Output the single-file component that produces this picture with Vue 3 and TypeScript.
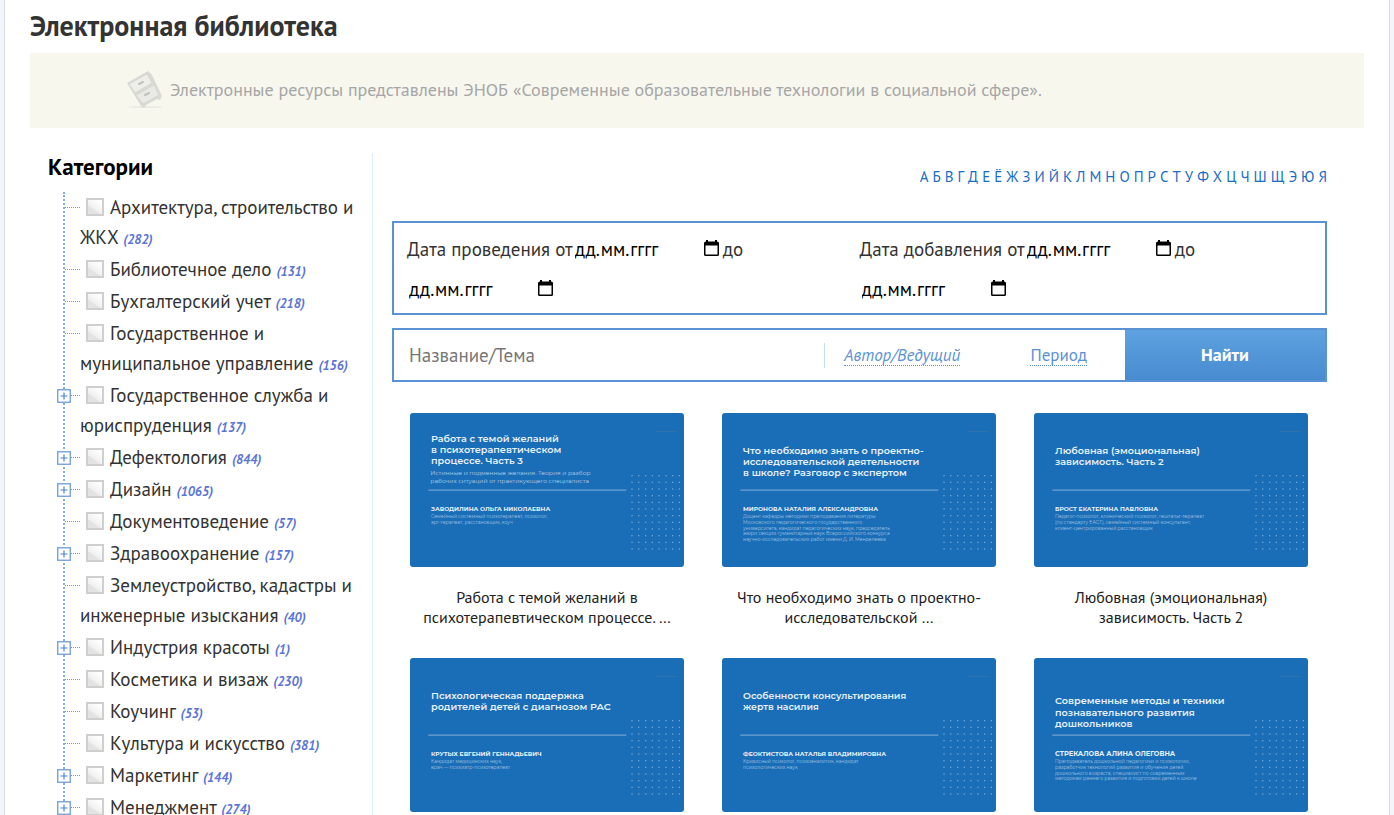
<script setup lang="ts">
import { ref } from 'vue'

interface Category {
  name: string
  count: number
  expandable?: boolean
}

interface Slide {
  caption: string
  titleY: number
  title: string[]
  compactTitle?: boolean
  subtitle?: string[]
  speaker: string
  largeSpeaker?: boolean
  about: string[]
}

const categories: Category[] = [
  { name: 'Архитектура, строительство и ЖКХ', count: 282 },
  { name: 'Библиотечное дело', count: 131 },
  { name: 'Бухгалтерский учет', count: 218 },
  { name: 'Государственное и муниципальное управление', count: 156 },
  { name: 'Государственное служба и юриспруденция', count: 137, expandable: true },
  { name: 'Дефектология', count: 844, expandable: true },
  { name: 'Дизайн', count: 1065, expandable: true },
  { name: 'Документоведение', count: 57 },
  { name: 'Здравоохранение', count: 157, expandable: true },
  { name: 'Землеустройство, кадастры и инженерные изыскания', count: 40 },
  { name: 'Индустрия красоты', count: 1, expandable: true },
  { name: 'Косметика и визаж', count: 230 },
  { name: 'Коучинг', count: 53 },
  { name: 'Культура и искусство', count: 381 },
  { name: 'Маркетинг', count: 144, expandable: true },
  { name: 'Менеджмент', count: 274, expandable: true },
]

const letters = [...'АБВГДЕЁЖЗИЙКЛМНОПРСТУФХЦЧШЩЭЮЯ']

const periods = [
  { id: 'event', label: 'Дата проведения от' },
  { id: 'added', label: 'Дата добавления от' },
]

const slides: Slide[] = [
  {
    caption: 'Работа с темой желаний в психотерапевтическом процессе. …',
    titleY: 86,
    title: ['Работа с темой желаний', 'в психотерапевтическом', 'процессе. Часть 3'],
    subtitle: ['Истинные и подменные желания. Теория и разбор', 'рабочих ситуаций от практикующего специалиста'],
    speaker: 'ЗАВОДИЛИНА ОЛЬГА НИКОЛАЕВНА',
    about: ['Семейный системный психотерапевт, психолог,', 'арт-терапевт, расстановщик, коуч'],
  },
  {
    caption: 'Что необходимо знать о проектно-исследовательской …',
    titleY: 122,
    title: ['Что необходимо знать о проектно-', 'исследовательской деятельности', 'в школе? Разговор с экспертом'],
    speaker: 'МИРОНОВА НАТАЛИЯ АЛЕКСАНДРОВНА',
    about: [
      'Доцент кафедры методики преподавания литературы',
      'Московского педагогического государственного',
      'университета, кандидат педагогических наук, председатель',
      'жюри секции гуманитарных наук Всероссийского конкурса',
      'научно-исследовательских работ имени Д. И. Менделеева',
    ],
  },
  {
    caption: 'Любовная (эмоциональная) зависимость. Часть 2',
    titleY: 122,
    title: ['Любовная (эмоциональная)', 'зависимость. Часть 2'],
    speaker: 'БРОСТ ЕКАТЕРИНА ПАВЛОВНА',
    about: [
      'Педагог-психолог, клинический психолог, гештальт-терапевт',
      '(по стандарту EAGT), семейный системный консультант,',
      'клиент-центрированный расстановщик',
    ],
  },
  {
    caption: 'Психологическая поддержка родителей детей с …',
    titleY: 122,
    title: ['Психологическая поддержка', 'родителей детей с диагнозом РАС'],
    speaker: 'КРУТЫХ ЕВГЕНИЙ ГЕННАДЬЕВИЧ',
    about: ['Кандидат медицинских наук,', 'врач — психиатр-психотерапевт'],
  },
  {
    caption: 'Особенности консультирования жертв насилия',
    titleY: 122,
    title: ['Особенности консультирования', 'жертв насилия'],
    compactTitle: true,
    speaker: 'ФЕОКТИСТОВА НАТАЛЬЯ ВЛАДИМИРОВНА',
    about: ['Кризисный психолог, психоаналитик, кандидат', 'психологических наук'],
  },
  {
    caption: 'Современные методы и техники познавательного …',
    titleY: 139,
    title: ['Современные методы и техники', 'познавательного развития', 'дошкольников'],
    speaker: 'СТРЕКАЛОВА АЛИНА ОЛЕГОВНА',
    largeSpeaker: true,
    about: [
      'Преподаватель дошкольной педагогики и психологии,',
      'разработчик технологий развития и обучения детей',
      'дошкольного возраста, специалист по современным',
      'методикам раннего развития и подготовки детей к школе',
    ],
  },
]

const dotColumns = Array.from({ length: 8 }, (_, i) => 664 + Math.round(i * 20.3))
const dotRows = Array.from({ length: 12 }, (_, i) => 186 + i * 20)

const query = ref('')
</script>

<template>
  <div class="page">
    <h1 class="page-title">Электронная библиотека</h1>

    <p class="notice">
      <svg class="notice-icon" width="38" height="38" viewBox="0 0 38 38" aria-hidden="true">
        <ellipse cx="19" cy="36" rx="18" ry="1" fill="#ebebe3" />
        <path d="M1 12 L22 0 L26 4 L36 25 L34 29 L31 28 L20 34 L18 37 L15 35 Z" fill="#dadad4" />
        <path d="M3 13 L21 3 L26 12 L9 22 Z" fill="#eeeeea" stroke="#d8d8d2" />
        <path d="M10 24 L28 14 L33 24 L17 33 Z" fill="#e9e9e5" stroke="#d8d8d2" />
        <path d="M13 13 l4 -2 M19 24 l4 -2" stroke="#c2c2bc" stroke-width="2" stroke-linecap="round" />
      </svg>
      Электронные ресурсы представлены ЭНОБ «Современные образовательные технологии в социальной сфере».
    </p>

    <div class="columns">
      <aside class="sidebar">
        <h2 class="sidebar-title">Категории</h2>
        <ul class="tree">
          <li v-for="category in categories" :key="category.name" class="tree-item">
            <span class="branch"></span>
            <button v-if="category.expandable" type="button" class="expander" :aria-label="'Раскрыть ' + category.name">
              <svg width="14" height="14" viewBox="0 0 14 14" aria-hidden="true">
                <rect x="0.75" y="0.75" width="12.5" height="12.5" fill="#fff" stroke="#6f9cd8" stroke-width="1.3" />
                <path d="M3.5 7 H10.5 M7 3.5 V10.5" stroke="#4a84d0" stroke-width="1.2" />
              </svg>
            </button>
            <label class="category">
              <input type="checkbox" class="category-box" />{{ category.name }}
              <em class="category-count">({{ category.count }})</em>
            </label>
          </li>
        </ul>
      </aside>

      <main class="content">
        <nav class="alphabet" aria-label="Алфавитный указатель">
          <a v-for="letter in letters" :key="letter" href="#" class="letter">{{ letter }}</a>
        </nav>

        <form class="search" @submit.prevent>
          <div class="dates">
            <div v-for="period in periods" :key="period.id" class="period">
              <div v-for="edge in ['from', 'to']" :key="edge" class="date-row">
                <label v-if="edge === 'from'" :for="period.id + '-from'">{{ period.label }}</label>
                <span class="date-field">
                  <input
                    :id="period.id + '-' + edge"
                    type="text"
                    class="date-input"
                    placeholder="дд.мм.гггг"
                    :aria-label="edge === 'to' ? 'до' : undefined"
                  />
                  <button type="button" class="date-button" aria-label="Открыть календарь">
                    <svg width="15" height="16" viewBox="0 0 15 16" aria-hidden="true">
                      <path
                        fill="#000"
                        fill-rule="evenodd"
                        d="M2 0 H4 V1.5 H11 V0 H13 V1.5 Q15 1.5 15 3 V14.5 Q15 16 13.5 16 H1.5 Q0 16 0 14.5 V3 Q0 1.5 2 1.5 Z M1.5 5.5 V14.5 H13.5 V5.5 Z"
                      />
                    </svg>
                  </button>
                </span>
                <label v-if="edge === 'from'" :for="period.id + '-to'">до</label>
              </div>
            </div>
          </div>

          <div class="search-bar">
            <input v-model="query" type="text" class="query" placeholder="Название/Тема" aria-label="Название/Тема" />
            <div class="filters">
              <a href="#" class="filter filter-author">Автор/Ведущий</a>
              <a href="#" class="filter">Период</a>
            </div>
            <button type="submit" class="submit">Найти</button>
          </div>
        </form>

        <div class="cards">
          <a v-for="slide in slides" :key="slide.speaker" href="#" class="card">
            <svg class="cover" viewBox="0 0 822 462" aria-hidden="true">
              <rect width="822" height="462" fill="#1a6db7" />
              <rect x="740" y="54" width="60" height="2" fill="#3d76a5" />
              <text v-for="(line, i) in slide.title" :key="line" x="63" :y="slide.titleY + i * 34" class="slide-title" :class="{ 'slide-title-compact': slide.compactTitle }">{{ line }}</text>
              <text v-for="(line, i) in slide.subtitle" :key="line" x="61" :y="187 + i * 22" class="slide-subtitle">{{ line }}</text>
              <rect x="55" y="229" width="594" height="5" fill="#5c94cb" />
              <text x="63" y="293" class="slide-speaker" :class="{ 'slide-speaker-large': slide.largeSpeaker }">{{ slide.speaker }}</text>
              <text v-for="(line, i) in slide.about" :key="line" x="63" :y="316 + i * 17" class="slide-about">{{ line }}</text>
              <template v-for="y in dotRows" :key="y">
                <rect v-for="x in dotColumns" :key="x" :x="x" :y="y" width="4" height="4" fill="#6ea5d6" />
              </template>
            </svg>
            <span class="caption">{{ slide.caption }}</span>
          </a>
        </div>
      </main>
    </div>
  </div>
</template>

<style>
body {
  background: #f4f5fb;
}
</style>

<style scoped>
.page {
  box-sizing: border-box;
  height: 100vh;
  overflow-y: auto;
  scrollbar-width: none;
  margin: 0 4px;
  padding: 0 25px;
  border: solid #d9dbe4;
  border-width: 0 1px;
  background: #fff;
  color: #333;
  font-family: "PT Sans", "Noto Sans", sans-serif;
  font-size: 19px;
  line-height: 30px;
}

.page-title {
  margin: 0;
  padding: 7px 0 9px;
  font-size: 28px;
  line-height: 37px;
}

.notice {
  display: flex;
  align-items: center;
  gap: 6px;
  box-sizing: border-box;
  min-height: 75px;
  margin: 0;
  padding: 0 0 1px 96px;
  background: #f7f7ee;
  color: #a6a6a6;
  font-size: 18px;
}

.columns {
  display: flex;
  padding: 25px 37px 0 18px;
}

.sidebar {
  flex: 0 0 325px;
  box-sizing: border-box;
  border-right: 1px solid #deedfc;
}

.sidebar-title {
  margin: 0 0 12px;
  color: #000;
  font-size: 23px;
  line-height: 27px;
}

.tree {
  width: 292px;
  margin: 0 0 0 15px;
  padding: 0;
  list-style: none;
  border-left: 2px dotted #86aee0;
}

.tree-item {
  position: relative;
  padding: 0 0 2px 15px;
}

.branch {
  position: absolute;
  top: 15px;
  left: 0;
  width: 15px;
  border-top: 1px dotted #6f9cd8;
}

.expander {
  position: absolute;
  top: 9px;
  left: -8px;
  width: 14px;
  height: 14px;
  padding: 0;
  border: 0;
  background: none;
  cursor: pointer;
}

.expander svg {
  display: block;
}

.category-box {
  appearance: none;
  width: 18px;
  height: 18px;
  margin: 0 6px;
  border: 2px solid #cfcfcf;
  background: linear-gradient(215deg, #fff 10%, #f0f0f0 60%, #e2e2e2 68%, #e4e4e4);
  vertical-align: -2px;
}

.category-count {
  color: #5b74d6;
  font-size: 13px;
  font-weight: 700;
  line-height: 1;
}

.content {
  flex: 1;
  min-width: 0;
  padding-left: 19px;
}

.alphabet {
  display: flex;
  justify-content: flex-end;
  gap: 4px;
  padding: 9px 0 29px;
  font-size: 15px;
}

.letter {
  color: #1a6dc4;
  text-decoration: none;
}

.dates {
  display: grid;
  grid-template-columns: 1fr 1fr;
  margin-bottom: 13px;
  padding: 6px 13px 4px;
  border: 2px solid #5b92d4;
}

.date-row {
  display: flex;
  align-items: center;
  height: 40px;
}

.date-field {
  display: flex;
  align-items: center;
  width: 150px;
  box-sizing: border-box;
  padding: 0 4px 0 2px;
}

.date-input {
  flex: 1;
  min-width: 0;
  padding: 0;
  border: 0;
  outline: 0;
  background: none;
  font: inherit;
}

.date-input::placeholder {
  color: #000;
}

.date-button {
  align-self: flex-start;
  padding: 6px 0 0;
  border: 0;
  background: none;
}

.date-button svg {
  display: block;
}

.search-bar {
  display: flex;
  height: 50px;
  border: 2px solid #5b92d4;
}

.query {
  flex: 1;
  min-width: 0;
  padding: 0 15px;
  border: 0;
  outline: 0;
  background: none;
  font: inherit;
}

.query::placeholder {
  color: #777;
}

.filters {
  display: flex;
  justify-content: space-between;
  align-self: center;
  box-sizing: border-box;
  width: 301px;
  padding: 2px 38px 2px 19px;
  border-left: 1px solid #c5d9f0;
}

.filter {
  border-bottom: 1px dotted #5b92d4;
  color: #5b92d4;
  font-size: 17px;
  line-height: 20px;
  text-decoration: none;
}

.filter-author {
  font-style: italic;
}

.submit {
  flex: 0 0 200px;
  padding: 0;
  border: 0;
  background: linear-gradient(#5ea2e0, #488bd0);
  color: #fff;
  font: inherit;
  font-size: 18px;
  font-weight: 700;
}

.cards {
  display: grid;
  grid-template-columns: repeat(3, 1fr);
  gap: 31px 38px;
  padding: 31px 19px 0 18px;
}

.card {
  color: #222;
  text-align: center;
  text-decoration: none;
}

.cover {
  display: block;
  width: 100%;
  border-radius: 3px;
}

.caption {
  display: block;
  margin-top: 20px;
  font-size: 16px;
  line-height: 20px;
}

.slide-title,
.slide-subtitle,
.slide-speaker,
.slide-about {
  fill: #e6f0f8;
  font-family: Montserrat, Inter, sans-serif;
}

.slide-title {
  font-size: 29px;
  font-weight: 600;
}

.slide-title-compact {
  font-size: 28px;
}

.slide-subtitle {
  font-size: 18px;
  fill: #b5d0e8;
}

.slide-speaker {
  font-size: 18px;
  font-weight: 700;
}

.slide-speaker-large {
  font-size: 20px;
}

.slide-about {
  font-size: 14px;
  fill: #a4c5e3;
}
</style>
